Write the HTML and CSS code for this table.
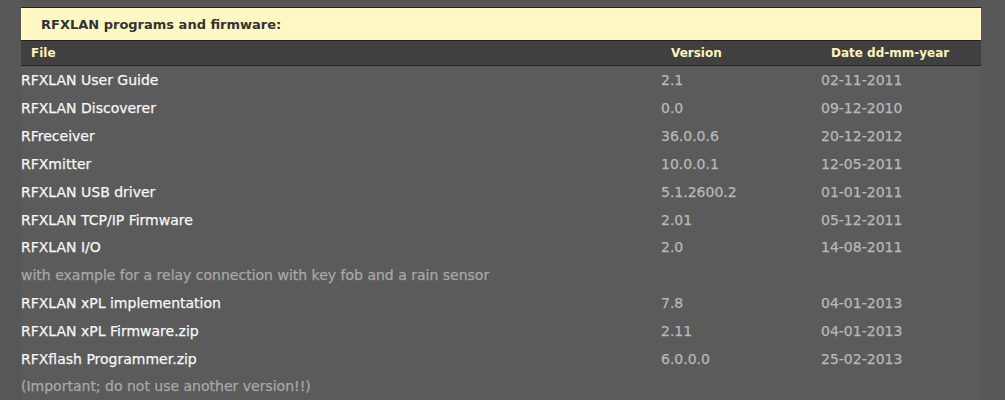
FILE: index.html
```html
<!DOCTYPE html>
<html>
<head>
<meta charset="utf-8">
<link rel="stylesheet" href="styles.css">
</head>
<body>
<div class="page">
  <div class="content">
    <div class="title">RFXLAN programs and firmware:</div>
    <table class="files">
      <thead>
        <tr><th class="c-file">File</th><th class="c-ver">Version</th><th class="c-date">Date dd-mm-year</th></tr>
      </thead>
      <tbody>
        <tr><td class="name">RFXLAN User Guide</td><td>2.1</td><td>02-11-2011</td></tr>
        <tr><td class="name">RFXLAN Discoverer</td><td>0.0</td><td>09-12-2010</td></tr>
        <tr><td class="name">RFreceiver</td><td>36.0.0.6</td><td>20-12-2012</td></tr>
        <tr><td class="name">RFXmitter</td><td>10.0.0.1</td><td>12-05-2011</td></tr>
        <tr><td class="name">RFXLAN USB driver</td><td>5.1.2600.2</td><td>01-01-2011</td></tr>
        <tr><td class="name">RFXLAN TCP/IP Firmware</td><td>2.01</td><td>05-12-2011</td></tr>
        <tr><td class="name">RFXLAN I/O</td><td>2.0</td><td>14-08-2011</td></tr>
        <tr><td class="note" colspan="3">with example for a relay connection with key fob and a rain sensor</td></tr>
        <tr><td class="name">RFXLAN xPL implementation</td><td>7.8</td><td>04-01-2013</td></tr>
        <tr><td class="name">RFXLAN xPL Firmware.zip</td><td>2.11</td><td>04-01-2013</td></tr>
        <tr><td class="name">RFXflash Programmer.zip</td><td>6.0.0.0</td><td>25-02-2013</td></tr>
        <tr><td class="note" colspan="3">(Important; do not use another version!!)</td></tr>
      </tbody>
    </table>
  </div>
</div>
</body>
</html>
```

FILE: styles.css
```css
html, body {
  margin: 0;
  padding: 0;
  background: #575757;
}
body {
  font-family: "DejaVu Sans", Verdana, sans-serif;
  height: 400px;
  overflow: hidden;
}
.page {
  padding: 7px 24px 0 21px;
}
.content {
  background: #5b5b5b;
}
.title {
  background: #fff8c2;
  border-top: 1px solid #222;
  border-bottom: 1px solid #222;
  height: 32px;
  line-height: 33px;
  padding-left: 20px;
  font-size: 13px;
  font-weight: bold;
  color: #333;
}
.files {
  width: 960px;
  border-collapse: collapse;
  font-size: 14px;
}
.files th {
  background: #404040;
  color: #fff3bd;
  font-size: 12px;
  font-weight: bold;
  text-align: left;
  height: 24px;
  padding: 0 0 0 10px;
  border-bottom: 1px solid #222;
}
.c-file { width: 630px; }
.c-ver { width: 150px; }
.files td {
  height: 27.8px;
  padding: 0;
  color: #b8b8b8;
  vertical-align: middle;
  -webkit-text-stroke: 0.25px currentColor;
}
.files tbody tr:first-child td { height: 28.5px; }
.files td.name {
  color: #f6f6f6;
}
.files td.note {
  color: #a8a8a8;
}
```
